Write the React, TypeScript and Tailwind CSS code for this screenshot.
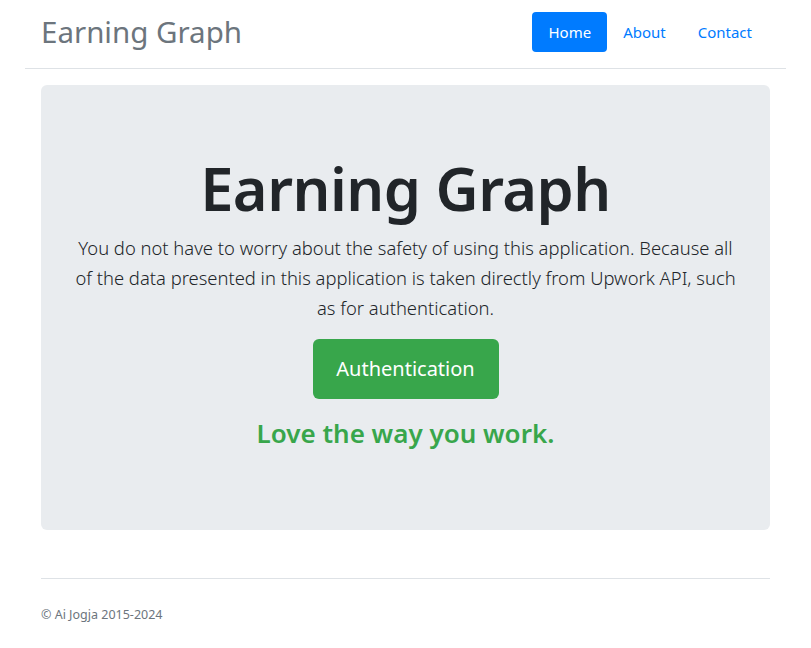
import React from 'react';

const navItems = [
  { label: 'Home', active: true },
  { label: 'About', active: false },
  { label: 'Contact', active: false },
];

export default function App() {
  return (
    <div className="min-h-screen bg-white font-['Noto_Sans',sans-serif] text-[#212529]">
      <div className="mx-auto w-[761px]">
        <header className="flex items-center justify-between border-b border-[#dee2e6] px-4 pt-3 pb-4">
          <h3 className="text-[29.5px] leading-none text-[#6c757d]">Earning Graph</h3>
          <nav className="mr-[2px] flex">
            {navItems.map((item) => (
              <a
                key={item.label}
                href="#"
                className={`flex h-10 items-center rounded px-4 text-[15px] ${
                  item.active ? 'bg-[#007bff] text-white' : 'text-[#007bff]'
                }`}
              >
                {item.label}
              </a>
            ))}
          </nav>
        </header>

        <main className="px-4">
          <div className="mt-4 flex h-[445px] flex-col items-center rounded-md bg-[#e9ecef] px-[30px] pt-[67px] text-center">
            <h1 className="text-[59.5px] font-semibold leading-[1.2] tracking-[-0.5px] text-[#212529]">Earning Graph</h1>
            <p className="mt-[10px] text-[18.4px] font-light leading-[30px]">
              You do not have to worry about the safety of using this application. Because all of the data presented in this
              application is taken directly from Upwork API, such as for authentication.
            </p>
            <button className="mt-4 h-[60px] w-[186px] rounded-md bg-[#38a64b] text-[20px] text-white">
              Authentication
            </button>
            <h4 className="mt-[17px] text-[26px] font-semibold leading-[34px] text-[#38a64b]">Love the way you work.</h4>
          </div>

          <footer className="mt-12 border-t border-[#dee2e6] pt-[26px]">
            <p className="text-[12.5px] leading-5 text-[#6c757d]">© Ai Jogja 2015-2024</p>
          </footer>
        </main>
      </div>
    </div>
  );
}
